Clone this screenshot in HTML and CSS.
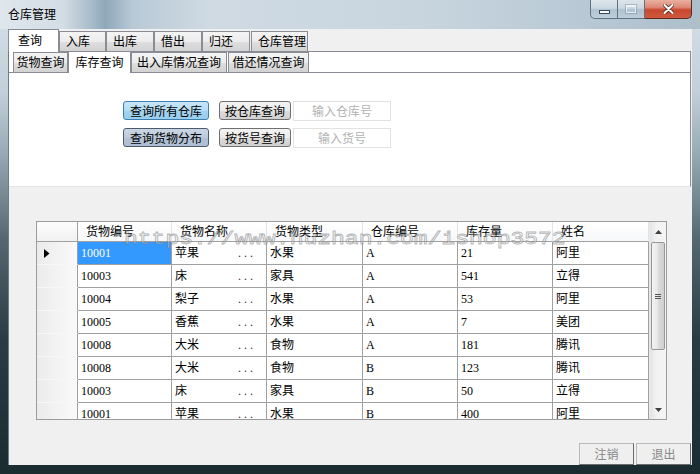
FILE: index.html
```html
<!DOCTYPE html>
<html lang="zh-CN">
<head>
<meta charset="utf-8">
<title>仓库管理</title>
<link rel="stylesheet" href="styles.css">
</head>
<body>
<div class="window">
  <div class="titlebar">
    <span class="title">仓库管理</span>
    <div class="caption">
      <div class="cb cb-min"><span class="min-glyph"></span></div>
      <div class="cb cb-max"><span class="max-glyph"></span></div>
      <div class="cb cb-close">
        <svg width="11" height="10" viewBox="0 0 11 10"><path d="M1.5 1 L9.5 9 M9.5 1 L1.5 9" stroke="#4a1a12" stroke-width="3.6" stroke-linecap="round"/><path d="M1.5 1 L9.5 9 M9.5 1 L1.5 9" stroke="#ffffff" stroke-width="2.2" stroke-linecap="round"/></svg>
      </div>
    </div>
  </div>

  <div class="client">
    <div class="tabctl">
      <div class="strip outer-strip">
        <div class="tab tab-sel ow-sel">查询</div>
        <div class="tab ow-47">入库</div>
        <div class="tab ow-48">出库</div>
        <div class="tab ow-48">借出</div>
        <div class="tab ow-48">归还</div>
        <div class="tab ow-57">仓库管理</div>
      </div>
      <div class="outer-page">
        <div class="strip inner-strip">
          <div class="tab itab iw-55">货物查询</div>
          <div class="tab itab tab-sel iw-sel">库存查询</div>
          <div class="tab itab iw-96">出入库情况查询</div>
          <div class="tab itab iw-81">借还情况查询</div>
        </div>
        <div class="inner-page">
          <div class="qrow">
            <button class="btn btn-wide btn-hot">查询所有仓库</button>
            <button class="btn btn-mid">按仓库查询</button>
            <div class="field">输入仓库号</div>
          </div>
          <div class="qrow">
            <button class="btn btn-wide btn-cool">查询货物分布</button>
            <button class="btn btn-mid">按货号查询</button>
            <div class="field">输入货号</div>
          </div>
        </div>
      </div>
    </div>

    <div class="grid">
      <div class="grid-main">
        <div class="rh corner"></div>
        <div class="hc">货物编号</div>
        <div class="hc">货物名称</div>
        <div class="hc">货物类型</div>
        <div class="hc">仓库编号</div>
        <div class="hc">库存量</div>
        <div class="hc">姓名</div>

        <div class="rh"><svg class="cur" width="6" height="9" viewBox="0 0 6 9"><path d="M0 0 L5.5 4.5 L0 9 Z" fill="#000"/></svg></div>
        <div class="c c-sel">10001</div>
        <div class="c c-name"><span>苹果</span><span class="dots">...</span></div>
        <div class="c">水果</div><div class="c">A</div><div class="c">21</div><div class="c">阿里</div>

        <div class="rh"></div>
        <div class="c">10003</div>
        <div class="c c-name"><span>床</span><span class="dots">...</span></div>
        <div class="c">家具</div><div class="c">A</div><div class="c">541</div><div class="c">立得</div>

        <div class="rh"></div>
        <div class="c">10004</div>
        <div class="c c-name"><span>梨子</span><span class="dots">...</span></div>
        <div class="c">水果</div><div class="c">A</div><div class="c">53</div><div class="c">阿里</div>

        <div class="rh"></div>
        <div class="c">10005</div>
        <div class="c c-name"><span>香蕉</span><span class="dots">...</span></div>
        <div class="c">水果</div><div class="c">A</div><div class="c">7</div><div class="c">美团</div>

        <div class="rh"></div>
        <div class="c">10008</div>
        <div class="c c-name"><span>大米</span><span class="dots">...</span></div>
        <div class="c">食物</div><div class="c">A</div><div class="c">181</div><div class="c">腾讯</div>

        <div class="rh"></div>
        <div class="c">10008</div>
        <div class="c c-name"><span>大米</span><span class="dots">...</span></div>
        <div class="c">食物</div><div class="c">B</div><div class="c">123</div><div class="c">腾讯</div>

        <div class="rh"></div>
        <div class="c">10003</div>
        <div class="c c-name"><span>床</span><span class="dots">...</span></div>
        <div class="c">家具</div><div class="c">B</div><div class="c">50</div><div class="c">立得</div>

        <div class="rh"></div>
        <div class="c">10001</div>
        <div class="c c-name"><span>苹果</span><span class="dots">...</span></div>
        <div class="c">水果</div><div class="c">B</div><div class="c">400</div><div class="c">阿里</div>
      </div>
      <div class="vscroll">
        <div class="sb-btn"><svg width="7" height="4" viewBox="0 0 7 4"><path d="M0 4 L3.5 0 L7 4 Z" fill="#404040"/></svg></div>
        <div class="thumb"><span class="grip"></span></div>
        <div class="sb-btn sb-down"><svg width="7" height="4" viewBox="0 0 7 4"><path d="M0 0 L3.5 4 L7 0 Z" fill="#404040"/></svg></div>
      </div>
    </div>

    <div class="footer">
      <button class="fbtn">注销</button>
      <button class="fbtn">退出</button>
    </div>
  </div>

  <div class="watermark">https://www.huzhan.com/ishop3572</div>
</div>
</body>
</html>
```

FILE: styles.css
```css
* { box-sizing: border-box; }
html, body { margin: 0; padding: 0; }
body {
  width: 700px;
  height: 474px;
  overflow: hidden;
  background: #1e2f35;
  font-family: "Liberation Serif", "Noto Sans CJK SC", serif;
  font-size: 12px;
  color: #000;
}

.window {
  position: relative;
  width: 700px;
  height: 474px;
  display: flex;
  flex-direction: column;
  background: linear-gradient(180deg, #d6e0e7 0px, #c3d0d9 90px, #9aadb7 150px, #55676e 240px, #2a3c42 340px, #1b2c31 474px);
}

/* title bar */
.titlebar {
  height: 29px;
  flex: none;
  display: flex;
  align-items: flex-start;
  padding: 0 8px 0 8px;
  background: linear-gradient(90deg, #dfe7ed 0, #d3dde5 9%, #a9bccb 13%, #8fa8ba 15%, #b8c9d6 19%, #cfdae3 30%, #c8d5df 60%, #b7c8d4 85%, #aebfcc 100%);
}
.title {
  font-family: "Noto Sans CJK SC", sans-serif;
  font-size: 12px;
  line-height: 27px;
  color: #000;
}
.caption { margin-left: auto; display: flex; }
.cb {
  height: 19px;
  border: 1px solid #5f7282;
  border-top: none;
  display: flex;
  align-items: center;
  justify-content: center;
  background: linear-gradient(180deg, rgba(255,255,255,0.55) 0, rgba(230,238,244,0.45) 45%, rgba(170,190,205,0.45) 55%, rgba(200,215,226,0.5) 100%);
}
.cb-min { width: 28px; border-radius: 0 0 0 5px; }
.cb-max { width: 27px; border-left: none; }
.cb-close {
  width: 47px;
  border-left: none;
  border-color: #5a2a22;
  border-radius: 0 0 5px 0;
  background: linear-gradient(180deg, #eab0a2 0, #de8a76 40%, #c9472f 55%, #d0593f 100%);
}
.min-glyph {
  width: 11px; height: 4px;
  margin-top: 5px;
  background: #f8fafc;
  border: 1px solid #3b4a56;
}
.max-glyph {
  width: 10px; height: 8px;
  border: 1px solid rgba(255,255,255,0.7);
  border-top-width: 2px;
  outline: 1px solid rgba(90,110,125,0.35);
}

/* client */
.client {
  flex: 1;
  margin: 0 8px 9px 8px;
  background: #f0f0f0;
  display: flex;
  flex-direction: column;
  border-left: 1px solid #6a7c86;
}

.tabctl { height: 158px; flex: none; display: flex; flex-direction: column; }
.strip { display: flex; align-items: flex-end; position: relative; z-index: 1; flex: none; }
.outer-strip { height: 22px; margin-left: -1px; }
.tab {
  height: 20px;
  border: 1px solid #898c95;
  border-bottom: none;
  background: linear-gradient(180deg, #f4f4f4 0, #ececec 50%, #dfdfdf 51%, #d2d2d2 100%);
  font-family: "Noto Sans CJK SC", sans-serif;
  font-size: 12px;
  line-height: 18px;
  padding-left: 6px;
  white-space: nowrap;
  color: #000;
}
.tab-sel {
  height: 23px;
  margin-bottom: -1px;
  background: #fff;
  line-height: 20px;
  padding-left: 9px;
}
.ow-sel { width: 51px; }
.ow-47 { width: 47px; }
.ow-48 { width: 48px; }
.ow-57 { width: 57px; margin-left: 1px; }

.outer-page {
  flex: 1;
  display: flex;
  flex-direction: column;
  background: #fff;
  border: 1px solid #898c95;
  border-left: none;
  border-bottom-color: #e4e4e4;
  margin-right: 1px;
}
.inner-strip { height: 20px; padding-left: 4px; }
.itab { padding-left: 0; text-align: center; }
.itab.tab-sel { height: 22px; padding-left: 0; }
.iw-55 { width: 55px; }
.iw-sel { width: 63px; }
.iw-96 { width: 96px; }
.iw-81 { width: 81px; margin-left: 1px; }

.inner-page {
  flex: 1;
  border-top: 1px solid #898c95;
  padding: 28px 0 0 114px;
  display: flex;
  flex-direction: column;
  gap: 8px;
}
.qrow { display: flex; align-items: flex-start; height: 19px; }
.btn {
  height: 19px;
  padding: 0;
  margin: 0;
  border: 1px solid #707070;
  border-radius: 3px;
  font-family: "Noto Sans CJK SC", sans-serif;
  font-size: 12px;
  line-height: 17px;
  color: #000;
  background: linear-gradient(180deg, #f3f3f3 0, #ebebeb 50%, #dddddd 51%, #d0d0d0 100%);
}
.btn-wide { width: 86px; margin-right: 10px; }
.btn-mid { width: 72px; margin-right: 2px; }
.btn-hot {
  border-color: #3c7fb1;
  background: linear-gradient(180deg, #c8e7f8 0, #b2dcf3 50%, #a2d3ef 51%, #98cdec 100%);
}
.btn-cool {
  border-color: #4d5c6c;
  background: linear-gradient(180deg, #cad6e4 0, #bccadb 50%, #b2c2d6 51%, #aebfd3 100%);
}
.field {
  width: 98px;
  height: 20px;
  border: 1px solid #e2e2e2;
  background: #fff;
  color: #b2b2b2;
  text-align: center;
  font-family: "Noto Sans CJK SC", sans-serif;
  font-size: 12px;
  line-height: 18px;
}

/* grid */
.grid {
  margin: 34px 0 0 27px;
  width: 631px;
  height: 199px;
  flex: none;
  border: 1px solid #9c9c9c;
  background: #fff;
  display: flex;
}
.grid-main {
  width: 612px;
  height: 197px;
  overflow: hidden;
  display: grid;
  grid-template-columns: 41px 94px 95px 96px 95px 95px 96px;
  grid-template-rows: 20px;
  grid-auto-rows: 23px;
  align-content: start;
}
.rh {
  background: linear-gradient(90deg, #ebebeb 0, #f4f4f4 60%, #f9f9f9 100%);
  border-right: 1px solid #a0a0a0;
  border-bottom: 1px solid #f7f7f7;
  display: flex;
  align-items: center;
  padding-left: 7px;
}
.corner { border-bottom: 1px solid #a0a0a0; background: linear-gradient(180deg, #fdfdfd, #f1f1f1); }
.hc {
  background: linear-gradient(180deg, #ffffff 0, #f7f8fa 100%);
  border-right: 1px solid #e3e3e3;
  border-bottom: 1px solid #a0a0a0;
  padding-left: 8px;
  font-family: "Noto Sans CJK SC", sans-serif;
  line-height: 18px;
  white-space: nowrap;
}
.c {
  border-right: 1px solid #a0a0a0;
  border-bottom: 1px solid #a0a0a0;
  padding: 0 2px 0 3px;
  line-height: 22px;
  white-space: nowrap;
  overflow: hidden;
}
.c-sel { background: #3399ff; color: #fff; }
.c-name { display: flex; justify-content: space-between; padding-right: 10px; }
.dots { letter-spacing: 3px; color: #333; }

.vscroll {
  width: 17px;
  height: 197px;
  display: flex;
  flex-direction: column;
  background: linear-gradient(90deg, #e4e4e4 0, #f2f2f2 40%, #f4f4f4 100%);
  border-left: 1px solid #eaeaea;
}
.sb-btn {
  height: 19px;
  flex: none;
  display: flex;
  align-items: center;
  justify-content: center;
}
.sb-down { margin-top: auto; }
.thumb {
  margin: 1px 1px 0 1px;
  height: 108px;
  flex: none;
  border: 1px solid #979797;
  border-radius: 2px;
  background: linear-gradient(90deg, #f3f3f3 0, #e8e8e8 45%, #dadada 55%, #d0d0d0 100%);
  display: flex;
  align-items: center;
  justify-content: center;
}
.grip {
  width: 6px;
  height: 5px;
  border-top: 1px solid #555;
  border-bottom: 1px solid #555;
  background: linear-gradient(180deg, transparent 1px, #555 1px, #555 2px, transparent 2px);
}

/* footer */
.footer {
  display: flex;
  justify-content: flex-end;
  gap: 2px;
  margin-top: 23px;
  padding-right: 1px;
}
.fbtn {
  width: 55px;
  height: 22px;
  margin: 0;
  padding: 0;
  border: 1px solid #b9b9b9;
  border-right-color: #6b6b6b;
  border-bottom-color: #6b6b6b;
  background: #efefef;
  color: #888;
  font-family: "Noto Sans CJK SC", sans-serif;
  font-size: 12px;
  line-height: 20px;
}

/* watermark overlay */
.watermark {
  position: absolute;
  left: 124px;
  top: 230px;
  font-family: "Liberation Mono", monospace;
  font-size: 23px;
  line-height: 23px;
  letter-spacing: 0;
  white-space: nowrap;
  transform: scaleY(0.8);
  transform-origin: 0 0;
  color: rgba(255,255,255,0.3);
  -webkit-text-stroke: 1px rgba(110,110,110,0.5);
  pointer-events: none;
}
```
